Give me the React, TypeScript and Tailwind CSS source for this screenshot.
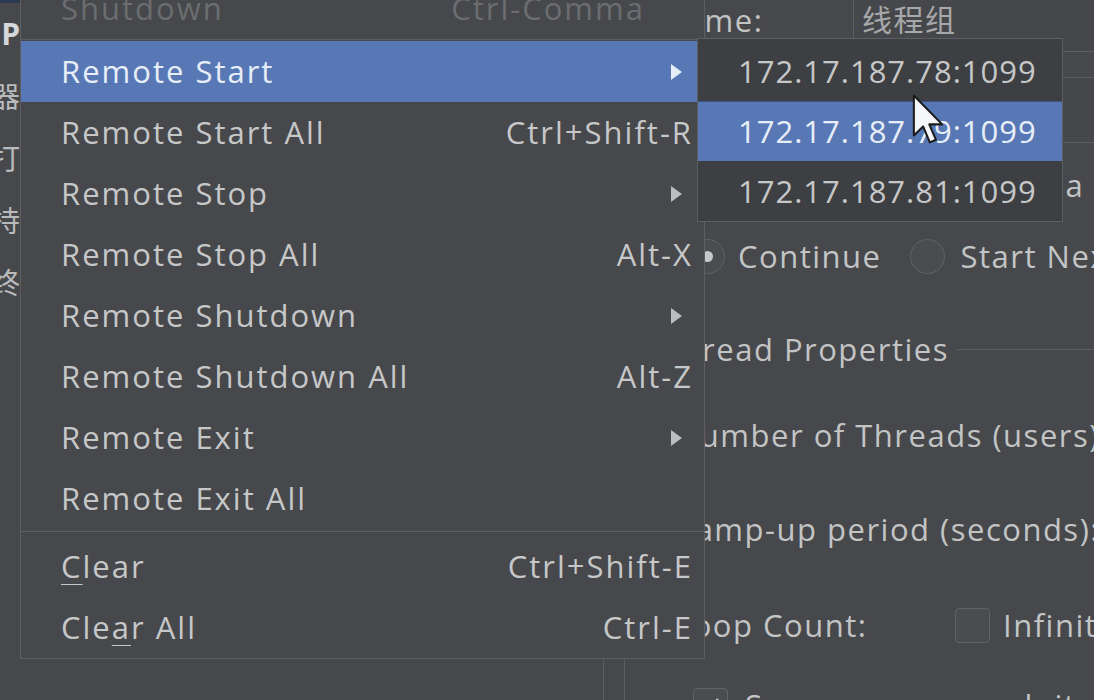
import React from "react";

type Item = { label: React.ReactNode; shortcut?: string; arrow?: boolean; active?: boolean };

const remoteItems: Item[] = [
  { label: "Remote Start", arrow: true, active: true },
  { label: "Remote Start All", shortcut: "Ctrl+Shift-R" },
  { label: "Remote Stop", arrow: true },
  { label: "Remote Stop All", shortcut: "Alt-X" },
  { label: "Remote Shutdown", arrow: true },
  { label: "Remote Shutdown All", shortcut: "Alt-Z" },
  { label: "Remote Exit", arrow: true },
  { label: "Remote Exit All" },
];

const hosts = ["172.17.187.78:1099", "172.17.187.79:1099", "172.17.187.81:1099"];

function Arrow({ light }: { light?: boolean }) {
  return (
    <svg width="13" height="18" viewBox="0 0 13 18" className="mr-[10px]">
      <path d="M1 1 L12 9 L1 17 Z" fill={light ? "#e8eef8" : "#bcbdbf"} />
    </svg>
  );
}

function MenuRow({ item }: { item: Item }) {
  return (
    <div
      className={`flex h-[61px] items-center justify-between pl-[40px] pr-[11px] tracking-[2px] ${
        item.active ? "bg-[#5778b5] text-[#e8eef8]" : ""
      }`}
    >
      <span>{item.label}</span>
      {item.shortcut ? <span>{item.shortcut}</span> : null}
      {item.arrow ? <Arrow light={item.active} /> : null}
    </div>
  );
}

function Separator({ className = "" }: { className?: string }) {
  return (
    <div className={className}>
      <div className="h-px bg-[#5c5e61]" />
    </div>
  );
}

function RunMenu() {
  return (
    <div className="absolute left-[20px] top-[-23px] w-[685px] border border-[#5c5e61] bg-[#46484b] text-[#c6c7c8]">
      <div className="flex h-[61px] items-center justify-between pl-[40px] pr-[59px] tracking-[2px] text-[#6b6d70]">
        <span>Shutdown</span>
        <span>Ctrl-Comma</span>
      </div>
      <Separator className="h-[2px]" />
      {remoteItems.map((item, i) => (
        <MenuRow key={i} item={item} />
      ))}
      <Separator className="pb-[4px] pt-[2px]" />
      <MenuRow
        item={{
          label: (
            <>
              <span className="underline decoration-1 underline-offset-[6px]">C</span>lear
            </>
          ),
          shortcut: "Ctrl+Shift-E",
        }}
      />
      <MenuRow
        item={{
          label: (
            <>
              Cle<span className="underline decoration-1 underline-offset-[6px]">a</span>r All
            </>
          ),
          shortcut: "Ctrl-E",
        }}
      />
    </div>
  );
}

function HostMenu() {
  return (
    <div className="absolute left-[697px] top-[38px] w-[366px] border border-[#5c5e61] bg-[#3d3f42] pt-[2px] text-[#c6c7c8]">
      {hosts.map((h, i) => (
        <div
          key={h}
          className={`flex h-[60px] items-center pl-[40px] tracking-[1px] ${
            i === 1 ? "border-t border-[#3f5685] bg-[#5778b5] text-[#e8eef8]" : ""
          }`}
        >
          {h}
        </div>
      ))}
    </div>
  );
}

function Cursor() {
  return (
    <svg
      className="absolute left-[911px] top-[93px]"
      width="34"
      height="54"
      viewBox="0 0 13 21"
    >
      <path
        d="M1 1 L1 16.5 L4.6 13 L7.2 19.2 L9.6 18.2 L7 12.2 L12 12.2 Z"
        fill="#f4f6fa"
        stroke="#1b1b1b"
        strokeWidth="0.8"
        strokeLinejoin="round"
      />
    </svg>
  );
}

function LeftStrip() {
  const glyphs = ["器", "打", "持", "终"];
  return (
    <div className="flex w-[20px] shrink-0 flex-col overflow-hidden border-t-[3px] border-[#2c3a52] text-[#b9babc]">
      <div className="mt-[11px] flex h-[40px] items-center justify-end text-[30px] font-bold text-[#d6d7d8]">
        P
      </div>
      {glyphs.map((g, i) => (
        <div key={i} className="mt-[22px] flex h-[40px] items-center justify-end whitespace-nowrap text-[29px]">
          <span className="shrink-0">{g}</span>
        </div>
      ))}
    </div>
  );
}

function Radio({ on }: { on?: boolean }) {
  return (
    <span className="flex h-[35px] w-[35px] shrink-0 items-center justify-center rounded-full border-[1.5px] border-[#606266] bg-[#4a4c4f]">
      {on ? <span className="h-[11px] w-[11px] rounded-full bg-[#c6c7c8]" /> : null}
    </span>
  );
}

function Check({ on }: { on?: boolean }) {
  return (
    <span className="flex h-[35px] w-[35px] shrink-0 items-center justify-center rounded-[4px] border-[1.5px] border-[#606266] bg-[#4a4c4f]">
      {on ? (
        <svg width="22" height="22" viewBox="0 0 22 22">
          <path d="M4 11 L9 16 L18 5" fill="none" stroke="#c6c7c8" strokeWidth="2.5" />
        </svg>
      ) : null}
    </span>
  );
}

function FormPane() {
  return (
    <div className="flex min-w-0 flex-1 flex-col overflow-hidden pl-[50px] tracking-[1.5px] text-[#c3c4c5]">
      <div className="mt-[-12px] flex h-[64px] shrink-0 items-center">
        <span className="ml-[-14px] w-[192px] shrink-0">Name:</span>
        <div className="flex h-full flex-1 items-center whitespace-nowrap border border-r-0 border-[#5c5e61] bg-[#45474a] pl-[8px] text-[30px] text-[#a7a8aa]">
          线程组
        </div>
      </div>
      <div className="mt-[25px] flex h-[60px] shrink-0 items-start">
        <span className="w-[178px] shrink-0 pt-[14px]">Comments:</span>
        <div className="h-[60px] flex-1 border-t border-l border-[#5c5e61] bg-[#45474a]" />
      </div>
      <div className="mt-[5px] shrink-0 border-t border-[#5c5e61]">
        <div className="flex h-[84px] items-center whitespace-nowrap pl-[6px]">
          Action to be taken after a Sampler error
        </div>
        <div className="flex h-[58px] items-center whitespace-nowrap pl-[15px]">
          <Radio on />
          <span className="ml-[13px]">Continue</span>
          <span className="ml-[28px]">
            <Radio />
          </span>
          <span className="ml-[16px]">Start Next Thread Loop</span>
        </div>
      </div>
      <div className="mt-[35px] flex h-[58px] shrink-0 items-center whitespace-nowrap">
        <span className="ml-[-12px]">Thread Properties</span>
        <div className="ml-[8px] h-px flex-1 bg-[#5c5e61]" />
      </div>
      <div className="mt-[10px] flex h-[94px] shrink-0 items-center whitespace-nowrap">
        Number of Threads (users):
      </div>
      <div className="flex h-[94px] shrink-0 items-center whitespace-nowrap">Ramp-up period (seconds):</div>
      <div className="mt-[2px] flex h-[94px] shrink-0 items-center whitespace-nowrap">
        <span className="w-[280px] shrink-0">Loop Count:</span>
        <Check />
        <span className="ml-[13px]">Infinite</span>
      </div>
      <div className="flex h-[66px] shrink-0 items-center whitespace-nowrap pl-[18px]">
        <Check on />
        <span className="ml-[17px]">Same user on each iteration</span>
      </div>
    </div>
  );
}

export default function App() {
  return (
    <div className="relative h-[700px] w-[1094px] overflow-hidden bg-[#46484b] font-['Open_Sans','Noto_Sans_CJK_SC',sans-serif] text-[31px] leading-none">
      <div className="flex h-full">
        <LeftStrip />
        <div className="w-[583px] shrink-0" />
        <div className="w-[22px] shrink-0 border-x border-[#5c5e61]" />
        <FormPane />
      </div>
      <RunMenu />
      <HostMenu />
      <Cursor />
    </div>
  );
}
